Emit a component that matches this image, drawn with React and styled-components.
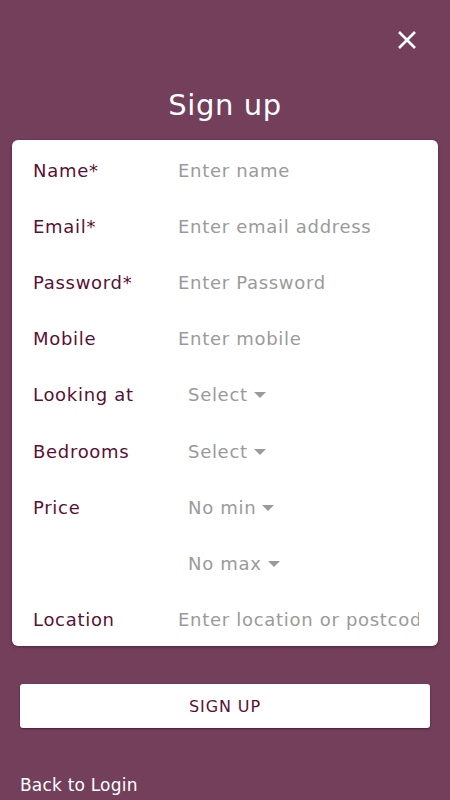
import React from "react";
import styled, { createGlobalStyle } from "styled-components";

const GlobalStyle = createGlobalStyle`
  html, body {
    margin: 0;
    padding: 0;
    background: #733f5b;
  }
  body {
    font-family: "DejaVu Sans", "Open Sans", sans-serif;
  }
  * {
    box-sizing: border-box;
  }
`;

const Page = styled.div`
  min-height: 800px;
  background: #733f5b;
  display: flex;
  flex-direction: column;
  padding: 0 12px;
`;

const TopBar = styled.div`
  display: flex;
  justify-content: flex-end;
  padding: 28px 19px 0 0;
  height: 60px;
`;

const CloseButton = styled.button`
  background: none;
  border: 0;
  padding: 0;
  width: 24px;
  height: 24px;
  display: flex;
  align-items: center;
  justify-content: center;
  cursor: pointer;
`;

const Title = styled.h1`
  margin: 27px 0 0;
  height: 53px;
  text-align: center;
  color: #fff;
  font-weight: 400;
  font-size: 29px;
  letter-spacing: 0.6px;
  line-height: 36px;
`;

const Card = styled.div`
  background: #fff;
  border-radius: 6px;
  box-shadow: 0 1px 3px rgba(60, 0, 25, 0.5);
  padding: 2px 19px 0 21px;
  height: 506px;
`;

const Row = styled.div`
  display: flex;
  align-items: center;
  height: 56.2px;
`;

const Label = styled.label`
  flex: 0 0 145px;
  color: #5b1035;
  font-size: 18px;
  letter-spacing: 0.7px;
  white-space: nowrap;
`;

const Input = styled.input`
  flex: 1;
  min-width: 0;
  border: 0;
  outline: none;
  font: inherit;
  font-size: 18px;
  letter-spacing: 0.7px;
  color: #333;
  padding: 0;
  background: transparent;
  &::placeholder {
    color: #9a9a9a;
  }
`;

const SelectBox = styled.div`
  display: flex;
  align-items: center;
  gap: 6px;
  padding-left: 10px;
  color: #9a9a9a;
  font-size: 18px;
  letter-spacing: 0.7px;
  cursor: pointer;
`;

const Caret = styled.span`
  width: 0;
  height: 0;
  border-left: 6px solid transparent;
  border-right: 6px solid transparent;
  border-top: 6px solid #9a9a9a;
  margin-top: 1px;
`;

const SubmitButton = styled.button`
  margin: 38px 8px 0;
  height: 44px;
  background: #fff;
  border: 0;
  border-radius: 3px;
  box-shadow: 0 1px 2px rgba(60, 0, 25, 0.6);
  color: #5b1035;
  font-family: inherit;
  font-size: 16px;
  letter-spacing: 0.9px;
  text-transform: uppercase;
  cursor: pointer;
`;

const BackLink = styled.a`
  margin: 47px 8px 0;
  color: #fff;
  font-size: 17px;
  letter-spacing: 0.2px;
  text-decoration: none;
  cursor: pointer;
`;

const Select = ({ value }) => (
  <SelectBox>
    {value}
    <Caret />
  </SelectBox>
);

const fields = [
  { label: "Name*", placeholder: "Enter name" },
  { label: "Email*", placeholder: "Enter email address" },
  { label: "Password*", placeholder: "Enter Password" },
  { label: "Mobile", placeholder: "Enter mobile" },
];

export default function App() {
  return (
    <>
      <GlobalStyle />
      <Page>
        <TopBar>
          <CloseButton aria-label="Close">
            <svg width="20" height="20" viewBox="0 0 20 20">
              <path d="M2 2L18 18M18 2L2 18" stroke="#fff" strokeWidth="2.6" />
            </svg>
          </CloseButton>
        </TopBar>
        <Title>Sign up</Title>
        <Card>
          {fields.map((f) => (
            <Row key={f.label}>
              <Label>{f.label}</Label>
              <Input placeholder={f.placeholder} />
            </Row>
          ))}
          <Row>
            <Label>Looking at</Label>
            <Select value="Select" />
          </Row>
          <Row>
            <Label>Bedrooms</Label>
            <Select value="Select" />
          </Row>
          <Row>
            <Label>Price</Label>
            <Select value="No min" />
          </Row>
          <Row>
            <Label />
            <Select value="No max" />
          </Row>
          <Row>
            <Label>Location</Label>
            <Input placeholder="Enter location or postcode" />
          </Row>
        </Card>
        <SubmitButton>Sign up</SubmitButton>
        <BackLink>Back to Login</BackLink>
      </Page>
    </>
  );
}
